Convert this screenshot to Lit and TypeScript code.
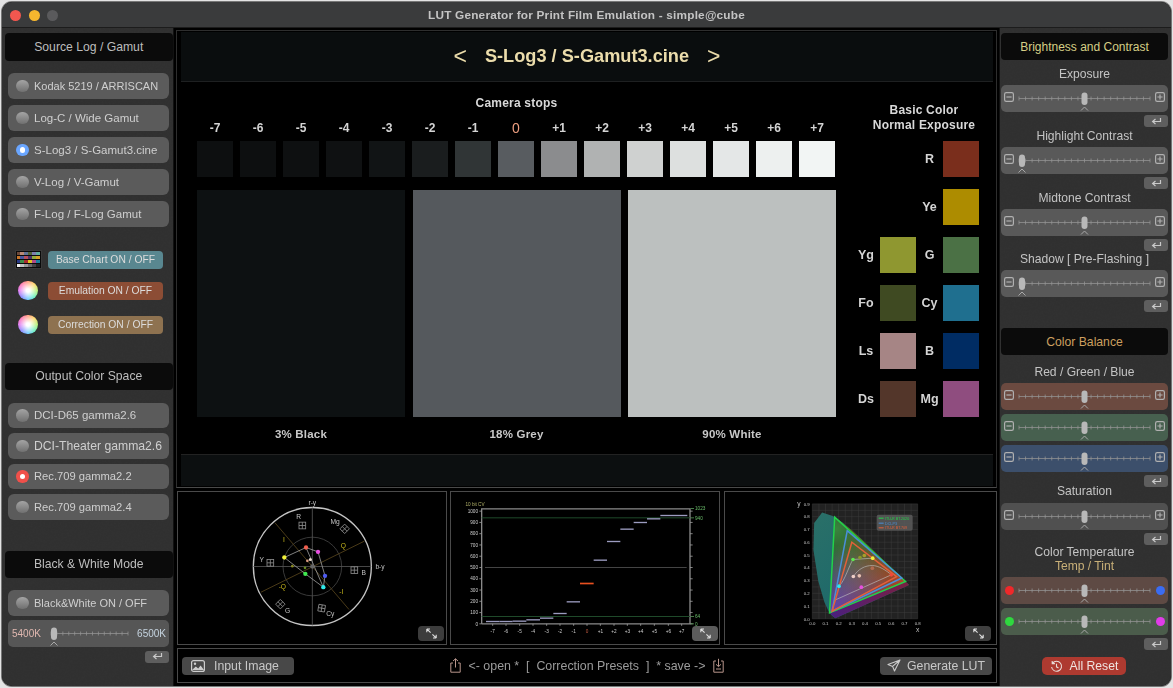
import { LitElement, html, css, svg } from "lit";
import { customElement } from "lit/decorators.js";

const noise = () => html`<svg class="noise" aria-hidden="true"><filter id="nz"><feTurbulence type="fractalNoise" baseFrequency="0.55" numOctaves="3" seed="4"/><feColorMatrix type="saturate" values="0"/></filter><rect width="100%" height="100%" filter="url(#nz)"/></svg>`;

const ret = () => html`<div class="ret"><svg width="11" height="9" viewBox="0 0 11 9"><path d="M9.5 1v3.5H2M4.5 2 1.6 4.5 4.5 7" fill="none" stroke="#c9c9c9" stroke-width="1.2"/></svg></div>`;

const track = (w: number, pos: number, n = 20, start = 3) => {
  const ticks = [];
  for (let i = 0; i <= n; i++) ticks.push(start + (i * w) / n);
  const tx = pos === 0 ? start + 3 : start + w / 2;
  return html`<svg class="track" width=${w + 6} height="27" viewBox="0 0 ${w + 6} 27">
    <line x1=${start} x2=${start + w} y1="13.5" y2="13.5" stroke="#959595" stroke-width="1" opacity=".75"/>
    ${ticks.map((x) => svg`<line x1=${x} x2=${x} y1="11.5" y2="15.5" stroke="#959595" opacity=".75"/>`)}
    <rect x=${tx - 3} y="7.5" width="6" height="12.5" rx="3" fill="#b8b8b8"/>
    <path d="M${tx - 3.5} 25.5 ${tx} 22 ${tx + 3.5} 25.5" fill="none" stroke="#a8a8a8" stroke-width="1"/>
  </svg>`;
};

const boxIcon = (plus: boolean) => html`<svg class="pm" width="10" height="10" viewBox="0 0 10 10"><rect x=".6" y=".6" width="8.8" height="8.8" rx="1.6" fill="none" stroke="#b0b0b0" stroke-width="1.2"/><path d=${plus ? "M2.4 5h5.2M5 2.4v5.2" : "M2.4 5h5.2"} stroke="#b0b0b0" stroke-width="1.2"/></svg>`;

const slider = (tint = "", pos = 0.5, ends?: [string, string]) => html`<div class="slider ${tint}">
  ${ends ? html`<i class="dot ${ends[0]}"></i>` : boxIcon(false)}
  ${track(131, pos)}
  ${ends ? html`<i class="dot ${ends[1]}"></i>` : boxIcon(true)}
</div>`;

const radio = (label: string, fit: string, st = "") => html`<div class="radio ${fit}"><i class="rb ${st}"></i><span>${label}</span></div>`;

const expand = (cls: string) => html`<div class="expand ${cls}"><svg width="13" height="11" viewBox="0 0 13 11"><path d="M5.6 4.6 1.8 1M1.8 1H5M1.8 1v3.2" fill="none" stroke="#ddd" stroke-width="1.1"/><path d="M7.4 6.4l3.8 3.6M11.2 10H8M11.2 10V6.8" fill="none" stroke="#ddd" stroke-width="1.1"/></svg></div>`;

const CHECK = ["#6e4a3a","#b98a76","#5f7396","#52663a","#7f7fae","#5fae9e","#c9762a","#48589e","#b84e5a","#4e3668","#92ae3a","#d8a02a","#2a3a88","#3e8a48","#a82a30","#e0c420","#b04a88","#1a80a0","#f2f2f2","#c4c4c4","#9a9a9a","#6c6c6c","#444","#222"];

const STOPS = [
  ["-7","#0d0f10"],["-6","#0d0f10"],["-5","#0e1011"],["-4","#0f1112"],["-3","#111415"],["-2","#1a1d1e"],["-1","#303536"],["0","#585c60"],
  ["+1","#8b8c8e"],["+2","#b0b2b2"],["+3","#cfd1d0"],["+4","#dde0df"],["+5","#e4e7e7"],["+6","#edf0ef"],["+7","#f2f5f4"],
];

const scope = () => {
  const tg = [[382,120,0],[509,130,45],[286,232,0],[538,254,0],[316,356,45],[440,368,10]];
  const lbl: [string, number, number][] = [["r-y",412,58],["b-y",615,250],["R",371,101],["Mg",480,114],["Y",260,230],["B",566,268],["G",338,382],["Cy",466,390]];
  const yl: [string, number, number][] = [["I",327,168],["Q",505,186],["-Q",322,309],["-I",499,326]];
  const pts: [number, number, string][] = [[393,186,"#f0604f"],[429,199,"#e84fe0"],[450,271,"#4f5cf0"],[445,305,"#2fe8e8"],[391,265,"#3fe84f"],[328,216,"#f0f03a"]];
  return html`<svg class="mon" viewBox="6 18 810 459">
    <circle cx="412" cy="243" r="177" fill="none" stroke="#c4c4c4" stroke-width="4"/>
    <circle cx="412" cy="243" r="88" fill="none" stroke="#444" stroke-width="2.5"/>
    <path d="M412 66V420M235 243H589" stroke="#555" stroke-width="2.5"/>
    <path d="M300 112 522 372M258 320 568 167" stroke="#4a3a18" stroke-width="3"/>
    ${tg.map(([x,y,r]) => svg`<g transform="translate(${x} ${y}) rotate(${r})" fill="none" stroke="#8d8d8d" stroke-width="2.5"><rect x="-10" y="-10" width="20" height="20"/><path d="M0-10V10M-10 0H10"/></g>`)}
    ${lbl.map(([t,x,y]) => svg`<text x=${x} y=${y} class="st" fill="#c4c4c4">${t}</text>`)}
    ${yl.map(([t,x,y]) => svg`<text x=${x} y=${y} class="st" fill="#c4b41c">${t}</text>`)}
    <path d="M328 216 393 186 429 199 450 271 445 305 391 265 328 216M393 186 445 305" fill="none" stroke="#9a9a9a" stroke-width="2.5"/>
    ${pts.map(([x,y,c]) => svg`<circle cx=${x} cy=${y} r="6.5" fill=${c}/>`)}
    <circle cx="412" cy="243" r="6.5" fill="#666"/>
    <circle cx="397" cy="226" r="4" fill="#d89a80"/><circle cx="406" cy="222" r="4.5" fill="#eadcd0"/>
    <circle cx="352" cy="242" r="4" fill="#8a8a20"/><circle cx="390" cy="247" r="4" fill="#6a8a20"/>
  </svg>`;
};

const wave = () => {
  const ys = [1000,900,800,700,600,500,400,300,200,100,0];
  const xt = ["-7","-6","-5","-4","-3","-2","-1","0","+1","+2","+3","+4","+5","+6","+7"];
  const cx = [128,168,209,249,290,330,371,411,451,492,532,572,613,655,695];
  const by = [408,408,407,403,398,384,349,294,224,168,131,111,100,90,90];
  const bx = [108,148,188,229,270,310,350,390,431,471,511,551,591,631,672,712];
  return html`<svg class="mon" viewBox="0 18 810 459">
    <path d="M95 415V70H720V415H95" fill="none" stroke="#8a8a8a" stroke-width="4"/>
    <path d="M95 97H720M95 393H720" stroke="#1f4a2a" stroke-width="3"/>
    <path d="M105 246H710" stroke="#444" stroke-width="3"/>
    <text x="75" y="60" class="wt" fill="#b0b068" text-anchor="middle">10 bit CV</text>
    ${ys.map((v, i) => { const y = 77 + i * 33.8; return svg`
      <text x="84" y=${y + 5} class="wt" fill="#cfcfcf" text-anchor="end">${v}</text>
      <path d="M88 ${y}H95M720 ${y}H728" stroke="#999" stroke-width="2.5"/>`; })}
    ${[["1023",69],["940",97],["64",393],["0",415]].map(([t,y]) => svg`<text x="735" y=${+y + 5} class="wt" fill="#6abc6a">${t}</text><path d="M722 ${y}H732" stroke="#6abc6a" stroke-width="2"/>`)}
    ${xt.map((t, i) => svg`<text x=${cx[i]} y="443" class="wt" text-anchor="middle" fill=${t === "0" ? "#c05a40" : "#cfcfcf"}>${t}</text><path d="M${cx[i]} 415V421" stroke="#999" stroke-width="2.5"/>`)}
    ${by.map((y, i) => svg`<path d="M${bx[i]} ${y}H${bx[i + 1]}" stroke=${i === 7 ? "#e8501f" : "#9c9cc0"} stroke-width=${i === 7 ? 5 : 4}/>`)}
  </svg>`;
};

const f = (x: number, y: number) => `${262 + x * 395},${400 - y * 383}`;
const poly = (a: number[][]) => a.map(([x, y]) => f(x, y)).join(" ");
const LOCUS = [[.1741,.005],[.144,.0297],[.1241,.0578],[.0913,.1327],[.0454,.295],[.0082,.5384],[.0139,.7502],[.0743,.8338],[.1547,.8059],[.2296,.7543],[.3016,.6923],[.3731,.6245],[.4441,.5547],[.5125,.4866],[.5752,.4242],[.627,.3725],[.6658,.334],[.6915,.3083],[.7347,.2653]];
const R2020 = [[.708,.292],[.17,.797],[.131,.046]];

const cie = () => {
  const gx = []; for (let i = 0; i <= 16; i++) gx.push(262 + i * 19.75);
  const gy = []; for (let i = 0; i <= 18; i++) gy.push(400 - i * 19.15);
  return html`<svg class="mon" viewBox="-3 18 819 459">
    <defs>
      <linearGradient id="lc" x1="0" x2="1" y1="0" y2="1"><stop offset="0" stop-color="#2a7068"/><stop offset=".5" stop-color="#206a6a"/><stop offset="1" stop-color="#1a5a70"/></linearGradient>
      <linearGradient id="pu" x1="0" x2="1" y1="0" y2="0"><stop offset="0" stop-color="#4a1f80"/><stop offset="1" stop-color="#7a2040"/></linearGradient>
      <radialGradient id="gG" gradientUnits="userSpaceOnUse" cx="335" cy="130" r="250"><stop offset="0" stop-color="#2c7a30"/><stop offset="1" stop-color="#000"/></radialGradient>
      <radialGradient id="gR" gradientUnits="userSpaceOnUse" cx="540" cy="290" r="230"><stop offset="0" stop-color="#b03a1c"/><stop offset="1" stop-color="#000"/></radialGradient>
      <radialGradient id="gB" gradientUnits="userSpaceOnUse" cx="320" cy="380" r="200"><stop offset="0" stop-color="#5a2fb0"/><stop offset="1" stop-color="#000"/></radialGradient>
    </defs>
    <rect x="262" y="55" width="316" height="345" fill="#222"/>
    ${gx.map((x) => svg`<path d="M${x} 55V400" stroke="#3d3d3d" stroke-width="1.5"/>`)}
    ${gy.map((y) => svg`<path d="M262 ${y}H578" stroke="#3d3d3d" stroke-width="1.5"/>`)}
    <polygon points=${poly(LOCUS)} fill="url(#lc)"/>
    <polygon points=${poly([[.17,.797],[.3016,.6923],[.5125,.4866],[.708,.292],[.4,.5]])} fill="#5a6a14"/>
    <polygon points=${poly([[.131,.046],[.1741,.005],[.7347,.2653],[.708,.292]])} fill="url(#pu)"/>
    <polygon points=${poly(R2020)} fill="#111"/>
    <g class="scr">
      <polygon points=${poly(R2020)} fill="url(#gG)"/>
      <polygon points=${poly(R2020)} fill="url(#gR)"/>
      <polygon points=${poly(R2020)} fill="url(#gB)"/>
    </g>
    <path d="M327 345 499 268M342 302C360 285 372 240 384 222L443 218M385 273C400 250 420 240 442 240 460 240 485 255 499 268" fill="none" stroke="#c0c0c0" stroke-width="2.5" opacity=".75"/>
    <polygon points=${poly(R2020)} fill="none" stroke="#22d24a" stroke-width="4.5"/>
    <polygon points=${poly([[.68,.32],[.265,.69],[.15,.06]])} fill="none" stroke="#4a8fd8" stroke-width="4.5"/>
    <polygon points=${poly([[.64,.33],[.3,.6],[.15,.06]])} fill="none" stroke="#e2603a" stroke-width="4.5"/>
    ${([[384,222,"#5fe84f"],[443,218,"#f0f03a"],[499,268,"#f0483a"],[409,305,"#e84fe0"],[342,302,"#2fe8f0"],[385,273,"#f0cfc8"],[403,271,"#e8c0b0"],[442,248,"#b06a50"],[405,216,"#8a9a2a"],[418,210,"#a8a02a"]] as [number,number,string][]).map(([x,y,c]) => svg`<circle cx=${x} cy=${y} r="5.5" fill=${c}/>`)}
    <rect x="455" y="88" width="108" height="48" rx="6" fill="#5a5a5a" opacity=".85"/>
    ${([["ITU-R BT.2020",98,"#22d24a"],["DCI-P3",113,"#4a8fd8"],["ITU-R BT.709",127,"#e2603a"]] as [string,number,string][]).map(([t,y,c]) => svg`<path d="M461 ${y}H476" stroke=${c} stroke-width="3"/><text x="480" y=${y + 4} class="lg" fill=${c}>${t}</text>`)}
    ${[0,1,2,3,4,5,6,7,8].map((i) => svg`<text x=${262 + i * 39.5} y="418" class="wt ct" text-anchor="middle" fill="#c8c8c8">${(i / 10).toFixed(1)}</text>`)}
    ${[0,1,2,3,4,5,6,7,8,9].map((i) => svg`<text x="254" y=${405 - i * 38.3} class="wt ct" text-anchor="end" fill="#c8c8c8">${(i / 10).toFixed(1)}</text>`)}
    <text x="222" y="61" class="st" text-anchor="middle" fill="#c4c4c4">y</text>
    <text x="578" y="439" class="st" text-anchor="middle" fill="#c4c4c4">x</text>
  </svg>`;
};

@customElement("app-root")
export class AppRoot extends LitElement {
  static styles = css`
    :host { display:block; width:1173px; height:688px; box-sizing:border-box; padding:2px; background:#e4e4e4; font-family:"Liberation Sans",Arial,sans-serif; color:#c8c8c8; overflow:hidden; }
    .win { width:1169px; height:684px; border-radius:10px; overflow:hidden; background:#000; display:flex; flex-direction:column; box-shadow:0 0 0 1px #777; }
    .bar { height:26px; flex:none; background:#3a3b3c; border-bottom:1px solid #1c1c1c; box-sizing:border-box; display:flex; align-items:center; justify-content:center; position:relative; font-size:11.8px; font-weight:700; color:#c4c4c4; letter-spacing:.2px; }
    .lights { position:absolute; left:8px; top:8px; display:flex; gap:7.5px; }
    .lights i { width:11px; height:11px; border-radius:50%; display:block; }
    .l1 { background:#f2574f; } .l2 { background:#f5b62e; } .l3 { background:#5a5a5c; }
    .body { flex:1; display:flex; min-height:0; }
    .side { flex:none; position:relative; background:#2f2f2f; box-sizing:border-box; overflow:hidden; display:flex; flex-direction:column; }
    .side.left { width:172px; padding:5px 0 0 3px; border-right:1px solid #111; }
    .side.right { width:172px; padding:5px 3px 0 1px; border-left:1px solid #111; }
    .side > *:not(.noise) { position:relative; }
    .noise { position:absolute; inset:0; width:100%; height:100%; opacity:.1; mix-blend-mode:overlay; pointer-events:none; }
    .hd { height:27px; flex:none; background:#0b0b0b; border-radius:4px; display:flex; align-items:center; justify-content:center; font-size:12.2px; color:#bdbdbd; }
    .left .hd { width:167.5px; height:27.5px; }
    .hd.yel { color:#d6cf86; font-size:12px; }
    .hd.org { color:#cda060; font-size:12.2px; }
    .list { display:flex; flex-direction:column; margin:12.5px 0 0 3px; width:161px; gap:6.5px; }
    .list.out { gap:5px; margin-top:12.5px; }
    .list.bw { margin-top:12px; gap:4px; }
    .radio { height:25.5px; flex:none; background:#5b5b5b; border-radius:6px; display:flex; align-items:center; color:#cfcfcf; white-space:nowrap; font-size:11.5px; }
    .f11 { font-size:11px; } .f112 { font-size:11.2px; } .f115 { font-size:11.5px; } .f122 { font-size:12.2px; }
    .rb { width:12.5px; height:12.5px; border-radius:50%; margin:0 5.5px 0 8px; flex:none; background:linear-gradient(#a4a4a4,#707070); display:flex; align-items:center; justify-content:center; }
    .rb.blue { background:#6aa6ff; } .rb.red { background:#f0504a; }
    .rb.blue::after,.rb.red::after { content:""; width:5.5px; height:5.5px; background:#fff; border-radius:50%; }
    .rows { display:flex; flex-direction:column; margin:24px 0 0 3px; }
    .row { display:flex; align-items:center; height:18px; flex:none; }
    .row.r2 { margin-top:13px; } .row.r3 { margin-top:16px; }
    .ic { width:40px; display:flex; justify-content:center; flex:none; }
    .pill { width:115px; height:18px; border-radius:4px; display:flex; align-items:center; justify-content:center; font-size:10.3px; color:#dcdcdc; }
    .p1 { background:#598790; } .p2 { background:#8c4d35; } .p3 { background:#8e7250; }
    .wheel { width:19.5px; height:19.5px; border-radius:50%; background:radial-gradient(circle,#fff 0 12%,rgba(255,255,255,0) 70%),conic-gradient(#ff9a7a,#ffd86a,#b8f27a,#6af0c0,#6ac8ff,#8a8aff,#e07af0,#ff7ab0,#ff9a7a); }
    .checker { width:27px; height:19.5px; background:#0a0a0a; border:1px solid #3a3a3a; box-sizing:border-box; display:grid; grid-template-columns:repeat(6,1fr); grid-template-rows:repeat(4,1fr); gap:.5px; padding:1px; }
    .checker i { display:block; }
    .mt-out { margin-top:29px; }
    .mt-bw { margin-top:31px; }
    .k { height:27px; flex:none; background:#565656; border-radius:5px; display:flex; align-items:center; justify-content:space-between; padding:0 3px 0 4px; font-size:10px; }
    .k .a { color:#e0b8b0; } .k .b { color:#c4d2de; }
    .ret { width:24px; height:12px; flex:none; background:#5e5e5e; border-radius:3px; display:flex; align-items:center; justify-content:center; margin:3px 0 0 auto; }
    .left .ret { margin:4px 0 0 140px; }
    .lb { height:14px; flex:none; display:flex; align-items:center; justify-content:center; font-size:12.1px; color:#c4c4c4; white-space:nowrap; }
    .lb.m7 { margin-top:7px; } .lb.m2 { margin-top:2px; } .lb.m1 { margin-top:1px; } .lb.m10 { margin-top:10px; } .lb.neg { margin-top:-3px; } .lb.m0 { margin-top:0; }
    .lb.tan { color:#c9b078; }
    .hd.m16 { margin-top:16px; }
    .slider { height:27px; flex:none; margin-top:4px; border-radius:5px; display:flex; align-items:center; padding:0 3px; gap:2px; background:#595959; }
    .slider.sat { background:#505050; margin-top:5px; }
    .slider.rd { background:#6b4a40; } .slider.gr { background:#47604f; } .slider.bl { background:#3c4f6b; }
    .slider.trd { background:#5e4a44; } .slider.tgr { background:#4b5c4b; }
    .track { flex:none; display:block; }
    .pm { flex:none; margin-top:-3px; }
    .dot { width:9px; height:9px; border-radius:50%; flex:none; margin:-1px .5px 0; }
    .dr { background:#f0282a; } .db { background:#3a6cf2; } .dg { background:#2fd83f; } .dm { background:#e03ce8; }
    .reset { width:84px; height:18px; flex:none; margin:7px 0 0 41px; background:#ae3a30; border-radius:5px; display:flex; align-items:center; justify-content:center; gap:7px; font-size:12.2px; color:#efe4e0; }
    .center { flex:1; min-width:0; display:flex; flex-direction:column; padding:2px 2px 0 3px; gap:3px; background:#000; }
    .main { height:458px; flex:none; border:1px solid #2e2e2e; border-bottom-color:#4a4a4a; box-sizing:border-box; display:flex; flex-direction:column; background:#000; margin-left:-1px; }
    .title { height:50px; flex:none; margin:1px 3px 0 4px; background:#0a0d0e; border-bottom:1px solid #1e2021; box-sizing:border-box; display:flex; align-items:center; justify-content:center; color:#ebdcab; font-weight:700; font-size:18.2px; }
    .chev { font-weight:400; font-size:23px; margin:-1px 18px 0; }
    .content { flex:1; display:flex; padding-left:20px; min-height:0; }
    .cols { width:639px; flex:none; padding-top:14px; box-sizing:border-box; }
    .cap { height:14px; display:flex; align-items:center; justify-content:center; font-size:12px; font-weight:700; color:#d8d8d8; letter-spacing:.2px; }
    .labs,.sw { display:grid; grid-template-columns:repeat(15,36px); gap:7px; }
    .labs { margin-top:10px; height:14px; }
    .labs span { display:flex; align-items:center; justify-content:center; font-size:12px; font-weight:700; color:#d4d4d4; }
    .labs .zero { color:#ee9f80; font-weight:400; font-size:14px; }
    .sw { margin-top:7px; height:36px; }
    .sw i { display:block; }
    .big { display:grid; grid-template-columns:repeat(3,208px); gap:7.5px; margin-top:13px; height:227px; }
    .big i { display:block; }
    .cb { background:#0d1112; } .cg { background:#55595d; } .cw { background:#bcc0bf; }
    .bl2 { display:grid; grid-template-columns:repeat(3,208px); gap:7.5px; margin-top:9px; height:16px; }
    .bl2 span { display:flex; align-items:center; justify-content:center; font-size:11.5px; font-weight:700; color:#c8c8c8; letter-spacing:.2px; }
    .basic { margin-left:16px; width:144px; flex:none; padding-top:21px; }
    .btit { text-align:center; font-size:12px; line-height:15px; font-weight:700; color:#d8d8d8; letter-spacing:.2px; }
    .bgrid { margin-top:8px; display:grid; grid-template-columns:28px 36px 27px 36px; grid-template-rows:repeat(6,36px); row-gap:12px; }
    .bgrid span { display:flex; align-items:center; justify-content:center; font-size:12.5px; font-weight:700; color:#d4d4d4; }
    .bgrid i { display:block; }
    .strip { height:31px; flex:none; margin:0 3px 1px 4px; background:#0c0f10; border-top:1px solid #222; }
    .monrow { height:154px; flex:none; display:flex; gap:3px; }
    .mp { position:relative; flex:none; width:270px; box-sizing:border-box; border:1px solid #4a4a4a; background:#000; }
    .mp.w3 { width:273px; margin-left:1px; }
    .mon { position:absolute; left:-1px; top:-1px; width:calc(100% + 2px); height:calc(100% + 2px); display:block; filter:blur(.3px); }
    .scr polygon { mix-blend-mode:screen; }
    .st { font:20px "Liberation Sans",Arial,sans-serif; text-anchor:middle; }
    .wt { font:14px "Liberation Sans",Arial,sans-serif; }
    .ct { font-size:13px; }
    .lg { font:11px "Liberation Sans",Arial,sans-serif; }
    .expand { position:absolute; right:2px; bottom:3px; width:26px; height:15px; border-radius:4px; background:#3c3c3c; display:flex; align-items:center; justify-content:center; }
    .expand.hi { background:#5c5c5c; right:1px; }
    .expand.lo { right:5px; background:#3f3f3f; }
    .foot { height:35px; flex:none; border:1px solid #4a4a4a; box-sizing:border-box; display:flex; align-items:center; justify-content:space-between; padding:0 4px; margin-right:0; }
    .fb { width:112px; height:18px; border-radius:4px; background:#484848; display:flex; align-items:center; font-size:12.3px; color:#c8c8c8; flex:none; }
    .fb svg { margin:0 9px 0 9px; flex:none; }
    .fb.gen svg { margin:0 6px 0 7px; }
    .mid { display:flex; align-items:center; font-size:12.4px; color:#9b9b9b; white-space:pre; gap:8px; }
  `;

  render() {
    return html`<div class="win">
      <div class="bar"><div class="lights"><i class="l1"></i><i class="l2"></i><i class="l3"></i></div>LUT Generator for Print Film Emulation - simple@cube</div>
      <div class="body">
        <aside class="side left">
          ${noise()}
          <div class="hd">Source Log / Gamut</div>
          <div class="list">
            ${radio("Kodak 5219 / ARRISCAN", "f11")}${radio("Log-C / Wide Gamut", "f115")}${radio("S-Log3 / S-Gamut3.cine", "f115", "blue")}${radio("V-Log / V-Gamut", "f115")}${radio("F-Log / F-Log Gamut", "f115")}
          </div>
          <div class="rows">
            <div class="row"><div class="ic"><div class="checker">${CHECK.map((c) => html`<i style="background:${c}"></i>`)}</div></div><div class="pill p1">Base Chart ON / OFF</div></div>
            <div class="row r2"><div class="ic"><div class="wheel"></div></div><div class="pill p2">Emulation ON / OFF</div></div>
            <div class="row r3"><div class="ic"><div class="wheel"></div></div><div class="pill p3">Correction ON / OFF</div></div>
          </div>
          <div class="hd mt-out">Output Color Space</div>
          <div class="list out">
            ${radio("DCI-D65 gamma2.6", "f115")}${radio("DCI-Theater gamma2.6", "f122")}${radio("Rec.709 gamma2.2", "f112", "red")}${radio("Rec.709 gamma2.4", "f112")}
          </div>
          <div class="hd mt-bw">Black &amp; White Mode</div>
          <div class="list bw">
            ${radio("Black&White ON / OFF", "f11")}
            <div class="k"><span class="a">5400K</span>${track(77, 0, 13)}<span class="b">6500K</span></div>
          </div>
          ${ret()}
        </aside>

        <main class="center">
          <section class="main">
            <div class="title"><span class="chev">&lt;</span>S-Log3 / S-Gamut3.cine<span class="chev">&gt;</span></div>
            <div class="content">
              <div class="cols">
                <div class="cap">Camera stops</div>
                <div class="labs">${STOPS.map(([t]) => html`<span class=${t === "0" ? "zero" : ""}>${t}</span>`)}</div>
                <div class="sw">${STOPS.map(([, c]) => html`<i style="background:${c}"></i>`)}</div>
                <div class="big"><i class="cb"></i><i class="cg"></i><i class="cw"></i></div>
                <div class="bl2"><span>3% Black</span><span>18% Grey</span><span>90% White</span></div>
              </div>
              <div class="basic">
                <div class="btit">Basic Color<br />Normal Exposure</div>
                <div class="bgrid">
                  ${[["","", "R","#7a2e1c"],["","", "Ye","#ad8c00"],["Yg","#8f9730","G","#4b7145"],["Fo","#3f4a22","Cy","#1f6f8f"],["Ls","#a68585","B","#002c63"],["Ds","#53362a","Mg","#8f4d7f"]].map(([a,ac,b,bc]) => html`
                    <span>${a}</span>${ac ? html`<i style="background:${ac}"></i>` : html`<i></i>`}<span>${b}</span><i style="background:${bc}"></i>`)}
                </div>
              </div>
            </div>
            <div class="strip"></div>
          </section>
          <section class="monrow">
            <div class="mp">${scope()}${expand("")}</div>
            <div class="mp">${wave()}${expand("hi")}</div>
            <div class="mp w3">${cie()}${expand("lo")}</div>
          </section>
          <footer class="foot">
            <div class="fb"><svg width="14" height="12" viewBox="0 0 14 12"><rect x=".6" y=".6" width="12.8" height="10.8" rx="2" fill="none" stroke="#ccc" stroke-width="1.2"/><circle cx="4" cy="3.8" r="1.2" fill="#ccc"/><path d="M1 10l3.8-3.4 2.4 2 2.4-3 3.4 4.4z" fill="#ccc"/></svg>Input Image</div>
            <div class="mid">
              <svg width="11" height="15" viewBox="0 0 11 15"><path d="M3 5H.8v9.2h9.4V5H8M5.5 9.5V.8M3 3 5.5.8 8 3" fill="none" stroke="#b8968c" stroke-width="1"/></svg>
              <span>&lt;- open *  [  Correction Presets  ]  * save -&gt;</span>
              <svg width="11" height="15" viewBox="0 0 11 15"><path d="M3 3H.8v11.2h9.4V3H8M5.5.8v7.7M3 6.3 5.5 8.6 8 6.3M3 11h5" fill="none" stroke="#b8968c" stroke-width="1"/></svg>
            </div>
            <div class="fb gen"><svg width="14" height="13" viewBox="0 0 14 13"><path d="M13 1 1 5.6l4.6 1.8L7.5 12zM13 1 5.6 7.4" fill="none" stroke="#ccc" stroke-width="1.1" stroke-linejoin="round"/></svg>Generate LUT</div>
          </footer>
        </main>

        <aside class="side right">
          ${noise()}
          <div class="hd yel">Brightness and Contrast</div>
          <div class="lb m7">Exposure</div>${slider()}${ret()}
          <div class="lb m2">Highlight Contrast</div>${slider("", 0)}${ret()}
          <div class="lb m2">Midtone Contrast</div>${slider()}${ret()}
          <div class="lb m1">Shadow [ Pre-Flashing ]</div>${slider("", 0)}${ret()}
          <div class="hd org m16">Color Balance</div>
          <div class="lb m10">Red / Green / Blue</div>${slider("rd")}${slider("gr")}${slider("bl")}${ret()}
          <div class="lb neg">Saturation</div>${slider("sat")}${ret()}
          <div class="lb m0">Color Temperature</div><div class="lb tan">Temp / Tint</div>
          ${slider("trd", 0.5, ["dr", "db"])}${slider("tgr", 0.5, ["dg", "dm"])}${ret()}
          <div class="reset"><svg width="13" height="13" viewBox="0 0 13 13"><path d="M2.6 3.2A5 5 0 1 1 1.6 7M2.2 .9v2.7h2.7M6.5 3.8v3l2 1.1" fill="none" stroke="#e8dcd8" stroke-width="1.1"/></svg>All Reset</div>
        </aside>
      </div>
    </div>`;
  }
}
